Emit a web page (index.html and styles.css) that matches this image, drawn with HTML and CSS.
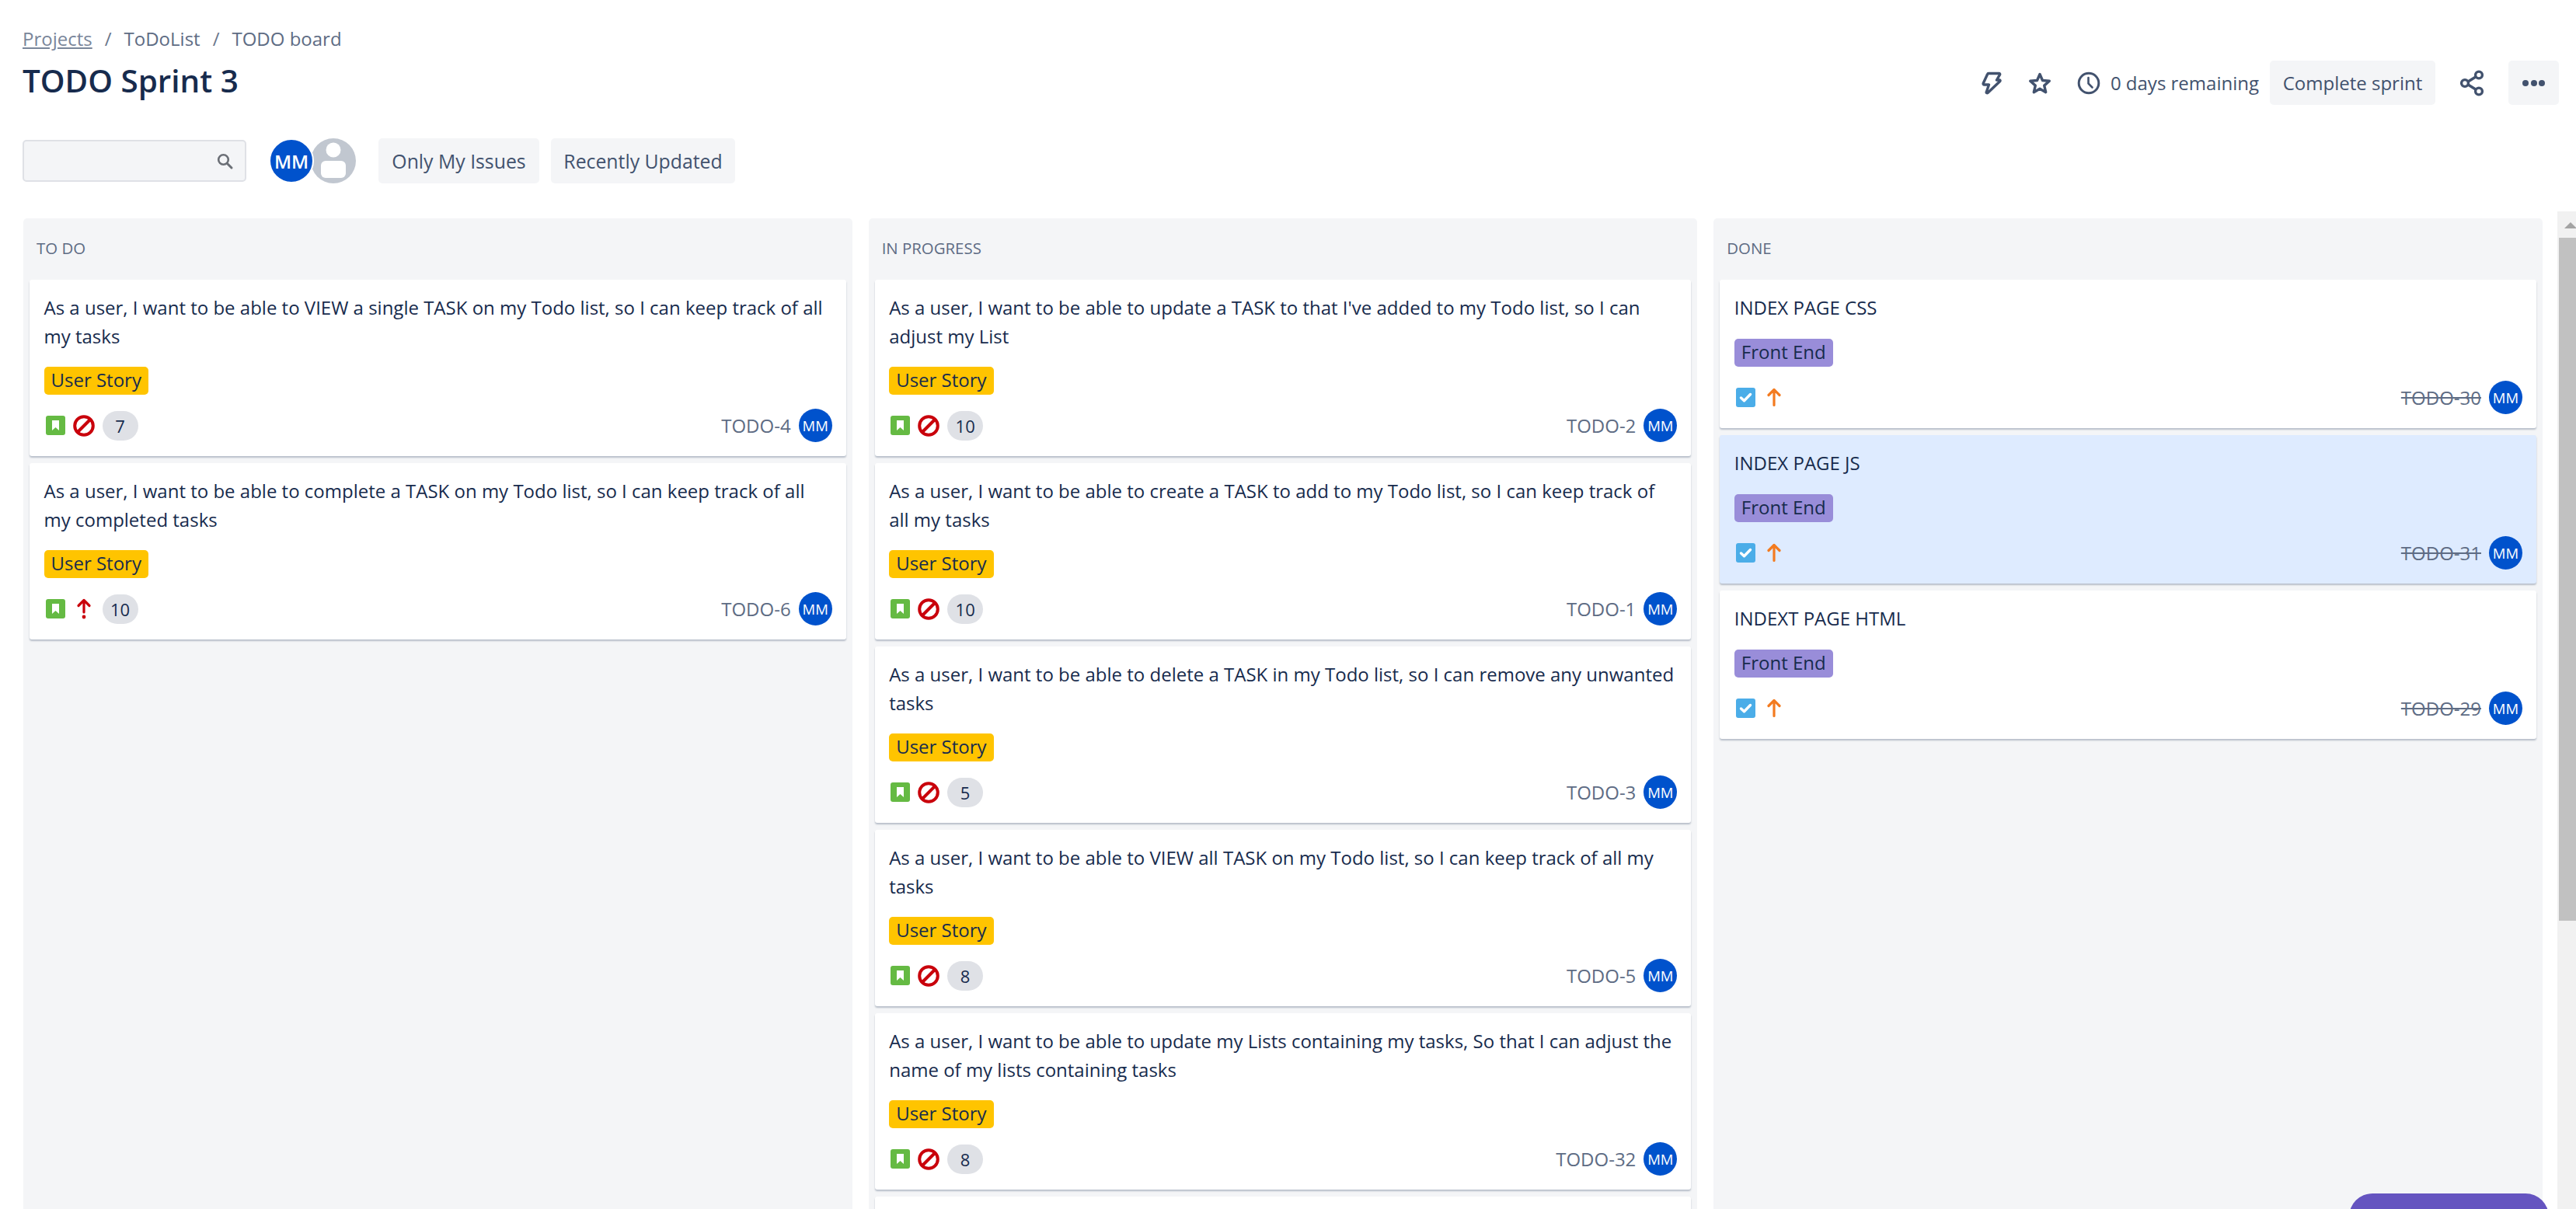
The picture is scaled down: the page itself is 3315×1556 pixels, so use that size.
FILE: index.html
```html
<!DOCTYPE html>
<html lang="en">
<head>
<meta charset="utf-8">
<title>TODO Sprint 3</title>
<link rel="stylesheet" href="styles.css">
</head>
<body>
<svg class="defs" width="0" height="0" aria-hidden="true">
  <symbol id="story" viewBox="0 0 25 25"><rect width="25" height="25" rx="3" fill="#65ba43"/><path d="M8 6h9v13l-4.500-4-4.500 4z" fill="#fff"/></symbol>
  <symbol id="blocker" viewBox="0 0 28 28"><circle cx="14" cy="14" r="11.800" fill="none" stroke="#c9000b" stroke-width="4"/><path d="M6 22 22 6" stroke="#c9000b" stroke-width="4"/></symbol>
  <symbol id="task" viewBox="0 0 25 25"><rect width="25" height="25" rx="3" fill="#4bade8"/><path d="M6.500 13l4 3.800 8-8.300" fill="none" stroke="#fff" stroke-width="3.400" stroke-linecap="round" stroke-linejoin="round"/></symbol>
  <symbol id="high" viewBox="0 0 28 28"><path d="M14 24.500V4.500M7 11.500l7-7 7 7" fill="none" stroke="#f37b20" stroke-width="3.200" stroke-linecap="round" stroke-linejoin="round"/></symbol>
  <symbol id="highest" viewBox="0 0 28 28"><path d="M14 18V2.500M7 9.500l7-7 7 7" fill="none" stroke="#c9000b" stroke-width="3.200" stroke-linecap="round" stroke-linejoin="round"/><circle cx="14" cy="24" r="2.400" fill="#c9000b"/></symbol>
</svg>

<header class="top">
  <div class="top-left">
    <nav class="crumbs"><a class="crumb-link">Projects</a><span class="sep">/</span><span>ToDoList</span><span class="sep">/</span><span>TODO board</span></nav>
    <h1 class="title">TODO Sprint 3</h1>
  </div>
  <div class="actions">
    <svg class="act-bolt" viewBox="0 0 26 30" width="26" height="30"><path d="M9 2.500h13.500c1 0 1.500.8 1 1.700L19.500 11h3.500c1 0 1.300.8.800 1.500L8 27.500c-.9.800-2.100 0-1.700-1L9.500 17H3.500c-1 0-1.500-.8-1.300-1.800L7.500 3.800C7.800 3 8.300 2.500 9 2.500z" fill="none" stroke="#42526e" stroke-width="3.400" stroke-linejoin="round"/></svg>
    <svg class="act-star" viewBox="0 0 30 30" width="30" height="30"><path d="M15 3.500l3.500 8 8.800.8-6.600 5.800 2 8.600L15 22.200l-7.700 4.500 2-8.600-6.600-5.800 8.800-.8z" fill="none" stroke="#42526e" stroke-width="3.400" stroke-linejoin="round"/></svg>
    <svg class="act-clock" viewBox="0 0 30 30" width="30" height="30"><circle cx="15" cy="15" r="12.800" fill="none" stroke="#42526e" stroke-width="3"/><path d="M14.500 8v7.500l5 5" fill="none" stroke="#42526e" stroke-width="2.600" stroke-linecap="round"/></svg>
    <span class="days">0 days remaining</span>
    <button class="btn btn-sprint">Complete sprint</button>
    <svg class="act-share" viewBox="0 0 34 34" width="34" height="34"><path d="M9 17 25 7M9 17l16 10" stroke="#42526e" stroke-width="3.400"/><circle cx="8" cy="17" r="4.400" fill="#fff" stroke="#42526e" stroke-width="3.400"/><circle cx="26" cy="6.500" r="4.400" fill="#fff" stroke="#42526e" stroke-width="3.400"/><circle cx="26" cy="27.500" r="4.400" fill="#fff" stroke="#42526e" stroke-width="3.400"/></svg>
    <button class="btn btn-more" aria-label="More"><span class="dot"></span><span class="dot"></span><span class="dot"></span></button>
  </div>
</header>

<section class="filters">
  <div class="search"><svg viewBox="0 0 24 24" width="24" height="24"><circle cx="10.500" cy="10.500" r="6.300" fill="none" stroke="#6b6f76" stroke-width="2.600"/><path d="M15.500 15.500l5.500 5.500" stroke="#6b6f76" stroke-width="3" stroke-linecap="round"/></svg></div>
  <div class="people">
    <span class="avatar avatar-lg">MM</span>
    <span class="avatar-ghost"><svg viewBox="0 0 58 58" width="58" height="58"><circle cx="29" cy="29" r="29" fill="#c1c7d0"/><circle cx="29" cy="15" r="9.500" fill="#fff"/><rect x="13" y="29" width="32" height="22" rx="6" fill="#fff"/></svg></span>
  </div>
  <button class="btn btn-filter">Only My Issues</button>
  <button class="btn btn-filter">Recently Updated</button>
</section>

<main class="workspace">
  <div class="board">
    <section class="column">
      <h2 class="col-head">TO DO</h2>
      <article class="card">
        <p class="summary">As a user, I want to be able to VIEW a single TASK on my Todo list, so I can keep track of all my tasks</p>
        <div class="tags"><span class="tag tag-story">User Story</span></div>
        <div class="foot"><div class="meta"><svg class="ic-type"><use href="#story"/></svg><svg class="ic-pri"><use href="#blocker"/></svg><span class="count">7</span></div><div class="ref"><span class="key">TODO-4</span><span class="avatar">MM</span></div></div>
      </article>
      <article class="card">
        <p class="summary">As a user, I want to be able to complete a TASK on my Todo list, so I can keep track of all my completed tasks</p>
        <div class="tags"><span class="tag tag-story">User Story</span></div>
        <div class="foot"><div class="meta"><svg class="ic-type"><use href="#story"/></svg><svg class="ic-pri"><use href="#highest"/></svg><span class="count">10</span></div><div class="ref"><span class="key">TODO-6</span><span class="avatar">MM</span></div></div>
      </article>
    </section>

    <section class="column">
      <h2 class="col-head">IN PROGRESS</h2>
      <article class="card">
        <p class="summary">As a user, I want to be able to update a TASK to that I've added to my Todo list, so I can adjust my List</p>
        <div class="tags"><span class="tag tag-story">User Story</span></div>
        <div class="foot"><div class="meta"><svg class="ic-type"><use href="#story"/></svg><svg class="ic-pri"><use href="#blocker"/></svg><span class="count">10</span></div><div class="ref"><span class="key">TODO-2</span><span class="avatar">MM</span></div></div>
      </article>
      <article class="card">
        <p class="summary">As a user, I want to be able to create a TASK to add to my Todo list, so I can keep track of all my tasks</p>
        <div class="tags"><span class="tag tag-story">User Story</span></div>
        <div class="foot"><div class="meta"><svg class="ic-type"><use href="#story"/></svg><svg class="ic-pri"><use href="#blocker"/></svg><span class="count">10</span></div><div class="ref"><span class="key">TODO-1</span><span class="avatar">MM</span></div></div>
      </article>
      <article class="card">
        <p class="summary">As a user, I want to be able to delete a TASK in my Todo list, so I can remove any unwanted tasks</p>
        <div class="tags"><span class="tag tag-story">User Story</span></div>
        <div class="foot"><div class="meta"><svg class="ic-type"><use href="#story"/></svg><svg class="ic-pri"><use href="#blocker"/></svg><span class="count">5</span></div><div class="ref"><span class="key">TODO-3</span><span class="avatar">MM</span></div></div>
      </article>
      <article class="card">
        <p class="summary">As a user, I want to be able to VIEW all TASK on my Todo list, so I can keep track of all my tasks</p>
        <div class="tags"><span class="tag tag-story">User Story</span></div>
        <div class="foot"><div class="meta"><svg class="ic-type"><use href="#story"/></svg><svg class="ic-pri"><use href="#blocker"/></svg><span class="count">8</span></div><div class="ref"><span class="key">TODO-5</span><span class="avatar">MM</span></div></div>
      </article>
      <article class="card">
        <p class="summary">As a user, I want to be able to update my Lists containing my tasks, So that I can adjust the name of my lists containing tasks</p>
        <div class="tags"><span class="tag tag-story">User Story</span></div>
        <div class="foot"><div class="meta"><svg class="ic-type"><use href="#story"/></svg><svg class="ic-pri"><use href="#blocker"/></svg><span class="count">8</span></div><div class="ref"><span class="key">TODO-32</span><span class="avatar">MM</span></div></div>
      </article>
      <article class="card card-empty"></article>
    </section>

    <section class="column">
      <h2 class="col-head">DONE</h2>
      <article class="card card-done">
        <p class="summary">INDEX PAGE CSS</p>
        <div class="tags"><span class="tag tag-front">Front End</span></div>
        <div class="foot"><div class="meta"><svg class="ic-type"><use href="#task"/></svg><svg class="ic-pri"><use href="#high"/></svg></div><div class="ref"><span class="key key-done">TODO-30</span><span class="avatar">MM</span></div></div>
      </article>
      <article class="card card-done card-selected">
        <p class="summary">INDEX PAGE JS</p>
        <div class="tags"><span class="tag tag-front">Front End</span></div>
        <div class="foot"><div class="meta"><svg class="ic-type"><use href="#task"/></svg><svg class="ic-pri"><use href="#high"/></svg></div><div class="ref"><span class="key key-done">TODO-31</span><span class="avatar">MM</span></div></div>
      </article>
      <article class="card card-done">
        <p class="summary">INDEXT PAGE HTML</p>
        <div class="tags"><span class="tag tag-front">Front End</span></div>
        <div class="foot"><div class="meta"><svg class="ic-type"><use href="#task"/></svg><svg class="ic-pri"><use href="#high"/></svg></div><div class="ref"><span class="key key-done">TODO-29</span><span class="avatar">MM</span></div></div>
      </article>
    </section>
  </div>
  <div class="scrollbar"><span class="scroll-up"></span><span class="scroll-thumb"></span></div>
</main>
<div class="fab"></div>
</body>
</html>
```
FILE: styles.css
```css
* { box-sizing: border-box; }
html, body { height: 100%; }
body {
  margin: 0;
  height: 1556px;
  overflow: hidden;
  background: #fff;
  color: #172b4d;
  font-family: "Open Sans", "Noto Sans", "Liberation Sans", sans-serif;
  font-size: 24px;
  display: flex;
  flex-direction: column;
}
.defs { position: absolute; }

.top {
  display: flex;
  justify-content: space-between;
  align-items: flex-start;
  padding: 33px 22px 0 29px;
  height: 178px;
  flex: none;
}
.crumbs { display: flex; gap: 16px; color: #5e6c84; line-height: 34px; }
.crumb-link { color: #7a869a; text-decoration: underline; }
.sep { color: #6b778c; }
.title { margin: 14px 0 0; font-size: 40.4px; line-height: 46px; font-weight: 600; color: #172b4d; }

.actions { display: flex; align-items: center; margin-top: 45px; height: 57px; color: #42526e; }
.act-bolt { margin-right: 34px; }
.act-star { margin-right: 33px; }
.act-clock { margin-right: 13px; }
.days { margin-right: 14px; white-space: nowrap; }
.act-share { margin: 0 30px 0 30px; }

.btn {
  border: 0;
  border-radius: 5px;
  background: #f4f5f7;
  color: #42526e;
  font: inherit;
  height: 58px;
  padding: 0 14px;
  white-space: nowrap;
}
.btn-sprint { height: 57px; width: 213px; padding: 0; }
.btn-more { width: 65px; height: 57px; padding: 0; display: flex; align-items: center; justify-content: center; gap: 2.500px; }
.dot { width: 8px; height: 8px; border-radius: 50%; background: #42526e; }

.filters { display: flex; align-items: center; padding-left: 29px; height: 58px; flex: none; }
.search {
  width: 288px; height: 54px;
  background: #f4f5f7;
  border: 2px solid #dfe1e6;
  border-radius: 5px;
  display: flex; align-items: center; justify-content: flex-end;
  padding-right: 14px;
}
.people { display: flex; margin: 0 29px; }
.avatar {
  width: 43px; height: 43px; border-radius: 50%;
  background: #0052cc; color: #fff;
  display: inline-flex; align-items: center; justify-content: center;
  font-size: 18.5px; flex: none;
}
.avatar-lg { width: 58px; height: 58px; font-size: 24px; font-weight: 600; position: relative; z-index: 1; border: 2px solid #fff; }
.avatar-ghost { width: 58px; height: 58px; margin-left: -4px; display: block; }
.btn-filter { width: 207px; padding: 0; margin-right: 15px; font-size: 24.8px; }
.btn-filter + .btn-filter { width: 237px; }

.workspace { flex: 1; min-height: 0; display: flex; margin-top: 36px; overflow: hidden; }
.board {
  width: 3272px;
  padding-left: 30px;
  display: grid;
  grid-template-columns: repeat(3, 1fr);
  column-gap: 21px;
  margin-top: 9px;
  align-items: stretch;
}
.column { background: #f4f5f7; border-radius: 5px 5px 0 0; padding: 0 8px; overflow: hidden; }
.col-head {
  margin: 0;
  height: 79px;
  padding: 24px 0 0 9px;
  font-size: 20.4px;
  line-height: 28px;
  font-weight: 400;
  color: #5e6c84;
}
.card {
  background: #fff;
  border-radius: 3px;
  box-shadow: 0 2px 2px rgba(9, 30, 66, 0.25);
  padding: 18px 19px 19px 18.500px;
  margin-bottom: 9px;
  height: 227px;
}
.card-done { height: 191px; }
.card-selected { background: #deebff; }
.summary { margin: 0 0 21px; line-height: 36.500px; color: #172b4d; }
.tags { display: flex; height: 36px; }
.tag {
  height: 36px;
  line-height: 34px;
  padding: 0 9px;
  border-radius: 5px;
  color: #172b4d;
  white-space: nowrap;
}
.tag-story { background: #ffc400; }
.tag-front { background: #998dd9; }
.foot { display: flex; justify-content: space-between; align-items: center; margin-top: 18px; height: 43px; }
.meta { display: flex; align-items: center; }
.ic-type { width: 25px; height: 25px; margin-left: 2px; }
.ic-pri { width: 28px; height: 28px; margin-left: 10px; }
.count {
  min-width: 46px; height: 38px; padding: 0 10px; margin-left: 10px;
  border-radius: 19px; background: #dfe1e6;
  font-size: 22px; line-height: 38px; text-align: center; color: #172b4d;
}
.ref { display: flex; align-items: center; gap: 10px; margin-right: -1px; }
.key { color: #5e6c84; }
.key-done { text-decoration: line-through; }

.scrollbar { width: 24px; margin-left: 19px; flex: none; background: #f1f1f1; position: relative; }
.scroll-up {
  position: absolute; left: 9px; top: 14px;
  border-left: 8px solid transparent; border-right: 8px solid transparent; border-bottom: 8px solid #a3a3a3;
}
.scroll-thumb { position: absolute; left: 2px; right: 0; top: 34px; height: 879px; background: #c1c1c1; }

.fab {
  position: absolute; left: 3023px; top: 1536px;
  width: 257px; height: 60px;
  border-radius: 30px;
  background: #6554c0;
}
```
